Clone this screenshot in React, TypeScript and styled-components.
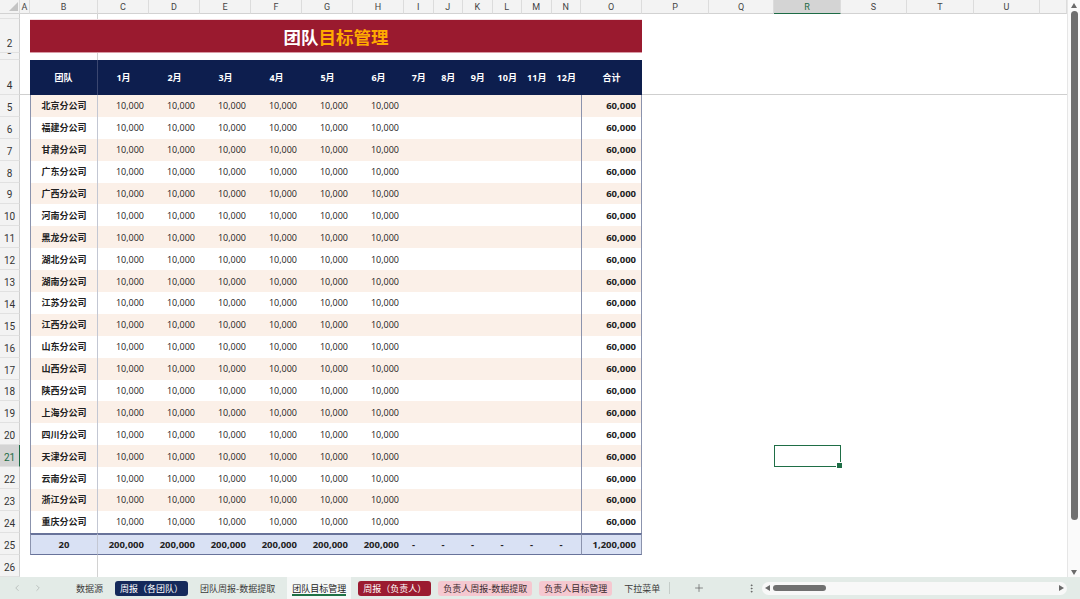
import React from "react";
import styled, { createGlobalStyle, css } from "styled-components";
import { ChevronLeft, ChevronRight, Plus, EllipsisVertical } from "lucide-react";

const COLS =
  "20px 10px 68px repeat(6, 51px) repeat(6, 29.5px) 61px 67px 65px 67px 66px 67px 66px 27px";
const LETTERS = ["A", "B", "C", "D", "E", "F", "G", "H", "I", "J", "K", "L", "M", "N", "O", "P", "Q", "R", "S", "T", "U", ""];
const MONTHS = ["1月", "2月", "3月", "4月", "5月", "6月", "7月", "8月", "9月", "10月", "11月", "12月"];
const BRANCHES = [
  "北京分公司", "福建分公司", "甘肃分公司", "广东分公司", "广西分公司",
  "河南分公司", "黑龙分公司", "湖北分公司", "湖南分公司", "江苏分公司",
  "江西分公司", "山东分公司", "山西分公司", "陕西分公司", "上海分公司",
  "四川分公司", "天津分公司", "云南分公司", "浙江分公司", "重庆分公司",
];
const ROW_H = 21.9;
const SELECTED_ROW = 21;

type Tone = "peach" | "plain" | "total";
type TabKind = "plain" | "navy" | "active" | "crimson" | "pink";

const TABS: { label: string; kind: TabKind }[] = [
  { label: "数据源", kind: "plain" },
  { label: "周报（各团队）", kind: "navy" },
  { label: "团队周报-数据提取", kind: "plain" },
  { label: "团队目标管理", kind: "active" },
  { label: "周报（负责人）", kind: "crimson" },
  { label: "负责人周报-数据提取", kind: "pink" },
  { label: "负责人目标管理", kind: "pink" },
  { label: "下拉菜单", kind: "plain" },
];

const TONE_BG: Record<Tone, string> = {
  peach: "#fbf0e8",
  plain: "#ffffff",
  total: "#d9e1f4",
};

const GlobalStyle = createGlobalStyle`
  * { box-sizing: border-box; }
  body {
    margin: 0;
    background: #fff;
    font-family: "Open Sans", "Noto Sans CJK SC", sans-serif;
  }
`;

const Window = styled.div`
  width: 1080px;
  height: 599px;
  display: flex;
  flex-direction: column;
  overflow: hidden;
  background: #fff;
`;

const Main = styled.div`
  display: flex;
  height: 577px;
`;

const Sheet = styled.div`
  width: 1067px;
  display: flex;
  flex-direction: column;
  overflow: hidden;
`;

const GridRow = styled.div<{ $h: number }>`
  display: grid;
  grid-template-columns: ${COLS};
  height: ${(p) => p.$h}px;
  flex-shrink: 0;
`;

const ColHead = styled.div<{ $active?: boolean }>`
  display: flex;
  align-items: center;
  justify-content: center;
  font: 9px Roboto, sans-serif;
  color: ${(p) => (p.$active ? "#1d6b45" : "#444")};
  background: ${(p) => (p.$active ? "#d4d4d4" : "#f3f3f3")};
  border-right: 1px solid #dcdcdc;
  border-bottom: 1px solid ${(p) => (p.$active ? "#1d6b45" : "#d2d2d2")};
`;

const Corner = styled(ColHead)`
  align-items: flex-end;
  justify-content: flex-end;
  padding: 0 1px 2px 0;
`;

const RowNum = styled.div<{ $active?: boolean }>`
  display: flex;
  align-items: flex-end;
  justify-content: center;
  overflow: hidden;
  padding-bottom: 2px;
  font: 10px Roboto, sans-serif;
  line-height: 12px;
  color: ${(p) => (p.$active ? "#1d6b45" : "#333")};
  background: ${(p) => (p.$active ? "#d4d4d4" : "#f3f3f3")};
  border-right: 1px solid ${(p) => (p.$active ? "#1d6b45" : "#cfcfcf")};
  border-bottom: 1px solid #e1e1e1;
`;

const Blank = styled.div<{ $frozenRight?: boolean; $frozenBottom?: boolean }>`
  border-right: ${(p) => (p.$frozenRight ? "1px solid #d2d2d2" : "none")};
  border-bottom: ${(p) => (p.$frozenBottom ? "1px solid #cfcfcf" : "none")};
`;

const Filler = styled(Blank)`
  grid-column: 17 / -1;
`;

const Title = styled.div`
  grid-column: 3 / 17;
  display: flex;
  align-items: center;
  justify-content: center;
  background: #9a1a2f;
  border-top: 1px solid #f3dde1;
  border-bottom: 1px solid #d99aa5;
  font-family: "Noto Sans CJK SC", sans-serif;
  font-size: 17.5px;
  font-weight: 700;
  color: #fff;
  span {
    color: #ffab00;
  }
`;

const HeadCell = styled.div<{ $divider?: boolean }>`
  display: flex;
  align-items: center;
  justify-content: center;
  background: #0d1e4e;
  color: #fff;
  font-size: 9px;
  font-weight: 700;
  white-space: nowrap;
  border-right: ${(p) => (p.$divider ? "1px solid #3b4770" : "none")};
`;

const toneBorders = css<{ $tone: Tone }>`
  ${(p) =>
    p.$tone === "total" &&
    css`
      border-top: 2px solid #68739a;
      border-bottom: 1px solid #68739a;
    `}
`;

const NameCell = styled.div<{ $tone: Tone }>`
  display: flex;
  align-items: center;
  justify-content: center;
  background: ${(p) => TONE_BG[p.$tone]};
  border-left: 1px solid #8b93ad;
  border-right: 1px solid #c3c7d3;
  font-size: ${(p) => (p.$tone === "total" ? "9.5px" : "9px")};
  font-weight: 700;
  color: #222;
  ${toneBorders}
`;

const NumCell = styled.div<{ $tone: Tone; $dash?: boolean }>`
  display: flex;
  align-items: center;
  justify-content: ${(p) => (p.$dash ? "flex-start" : "flex-end")};
  padding: ${(p) => (p.$dash ? "0 0 0 8px" : "0 5px 0 0")};
  background: ${(p) => TONE_BG[p.$tone]};
  font-size: ${(p) => (p.$tone === "total" ? "9.5px" : "9px")};
  font-weight: ${(p) => (p.$tone === "total" ? 700 : 400)};
  color: #222;
  white-space: nowrap;
  ${toneBorders}
`;

const SumCell = styled.div<{ $tone: Tone }>`
  display: flex;
  align-items: center;
  justify-content: flex-end;
  padding-right: 5px;
  background: ${(p) => TONE_BG[p.$tone]};
  border-left: 1px solid #8b93ad;
  border-right: 1px solid #8b93ad;
  font-size: 9.5px;
  font-weight: 700;
  color: #222;
  white-space: nowrap;
  ${toneBorders}
`;

const Selected = styled.div`
  grid-column: 19;
  position: relative;
  border: 1.5px solid #1f6e46;
  &::after {
    content: "";
    position: absolute;
    right: -3px;
    bottom: -3px;
    width: 5px;
    height: 5px;
    background: #1f6e46;
    border: 1px solid #fff;
  }
`;

const VScroll = styled.div`
  width: 13px;
  display: flex;
  flex-direction: column;
  align-items: center;
  padding: 3px 0 2px;
  background: #fafafa;
  border-left: 1px solid #e6e6e6;
`;

const VThumb = styled.div`
  width: 7px;
  height: 509px;
  margin-top: 3px;
  border-radius: 4px;
  background: #707070;
`;

const DownArrow = styled.svg`
  margin-top: auto;
`;

const TabBar = styled.div`
  height: 22px;
  display: flex;
  align-items: center;
  background: #e3ebe7;
  font-family: "Noto Sans CJK SC", sans-serif;
  font-size: 9px;
`;

const Nav = styled.div`
  width: 71px;
  display: flex;
  gap: 11px;
  padding-left: 12px;
  color: #a3a9a6;
`;

const TabList = styled.div`
  display: flex;
  align-items: center;
  gap: 7px;
  height: 100%;
`;

const TAB_STYLES: Record<TabKind, ReturnType<typeof css>> = {
  plain: css`
    color: #3a3a3a;
  `,
  navy: css`
    color: #fff;
    background: #14295a;
  `,
  crimson: css`
    color: #fff;
    background: #9b1b30;
  `,
  pink: css`
    color: #3a2a2d;
    background: #f5c8d0;
  `,
  active: css`
    align-self: stretch;
    height: auto;
    color: #222;
    background-color: #f6f8f7;
    background-image: linear-gradient(#1e7145, #1e7145);
    background-repeat: no-repeat;
    background-size: calc(100% - 10px) 2px;
    background-position: 5px calc(100% - 3px);
    border-radius: 0;
  `,
};

const Tab = styled.div<{ $kind: TabKind }>`
  height: 15px;
  padding: 0 5px;
  display: flex;
  align-items: center;
  white-space: nowrap;
  border-radius: 3px;
  ${(p) => TAB_STYLES[p.$kind]}
`;

const Sep = styled.div`
  width: 1px;
  height: 12px;
  margin-left: 4px;
  background: #c5cdc9;
`;

const IconBtn = styled.div<{ $ml: number }>`
  display: flex;
  align-items: center;
  justify-content: center;
  width: 14px;
  margin-left: ${(p) => p.$ml}px;
  color: #555;
`;

const HScroll = styled.div`
  flex: 1;
  height: 13px;
  margin: 0 13px 0 4px;
  display: flex;
  align-items: center;
  padding: 0 3px;
  border-radius: 7px;
  background: #f8f8f8;
`;

const HThumb = styled.div`
  width: 53px;
  height: 6px;
  margin-left: 3px;
  border-radius: 3px;
  background: #707070;
`;

const RightArrow = styled.svg`
  margin-left: auto;
`;

const Tri = ({ dir }: { dir: "up" | "down" | "left" | "right" }) => {
  const pts = {
    up: "0,5 3,0 6,5",
    down: "0,0 6,0 3,5",
    left: "5,0 5,6 0,3",
    right: "0,0 5,3 0,6",
  }[dir];
  const vertical = dir === "up" || dir === "down";
  const w = vertical ? 6 : 5;
  const h = vertical ? 5 : 6;
  const Comp = dir === "down" ? DownArrow : dir === "right" ? RightArrow : "svg";
  return (
    <Comp width={w} height={h} viewBox={`0 0 ${w} ${h}`}>
      <polygon points={pts} fill="#6a6a6a" />
    </Comp>
  );
};

const num = (n: number) => n.toLocaleString("en-US");

const EmptyRow = ({ n, h }: { n: number; h: number }) => (
  <GridRow $h={h}>
    <RowNum>{n}</RowNum>
    <Blank />
    <Blank $frozenRight />
  </GridRow>
);

export default function App() {
  return (
    <Window>
      <GlobalStyle />
      <Main>
        <Sheet>
          <GridRow $h={14}>
            <Corner>
              <svg width="9" height="9" viewBox="0 0 9 9">
                <polygon points="9,0 9,9 0,9" fill="#c4c4c4" />
              </svg>
            </Corner>
            {LETTERS.map((l, i) => (
              <ColHead key={i} $active={l === "R"}>
                {l}
              </ColHead>
            ))}
          </GridRow>

          <EmptyRow n={1} h={5} />
          <GridRow $h={34}>
            <RowNum>2</RowNum>
            <Blank />
            <Title>
              团队<span>目标管理</span>
            </Title>
          </GridRow>
          <EmptyRow n={3} h={7} />

          <GridRow $h={35}>
            <RowNum>4</RowNum>
            <Blank $frozenBottom />
            <HeadCell $divider>团队</HeadCell>
            {MONTHS.map((m) => (
              <HeadCell key={m}>{m}</HeadCell>
            ))}
            <HeadCell>合计</HeadCell>
            <Filler $frozenBottom />
          </GridRow>

          {BRANCHES.map((name, i) => {
            const rowNo = i + 5;
            const tone: Tone = i % 2 === 0 ? "peach" : "plain";
            return (
              <GridRow key={name} $h={ROW_H}>
                <RowNum $active={rowNo === SELECTED_ROW}>{rowNo}</RowNum>
                <Blank />
                <NameCell $tone={tone}>{name}</NameCell>
                {MONTHS.map((m, j) => (
                  <NumCell key={m} $tone={tone}>
                    {j < 6 ? num(10000) : ""}
                  </NumCell>
                ))}
                <SumCell $tone={tone}>{num(60000)}</SumCell>
                {rowNo === SELECTED_ROW && <Selected />}
              </GridRow>
            );
          })}

          <GridRow $h={ROW_H}>
            <RowNum>25</RowNum>
            <Blank />
            <NameCell $tone="total">{BRANCHES.length}</NameCell>
            {MONTHS.map((m, j) => (
              <NumCell key={m} $tone="total" $dash={j >= 6}>
                {j < 6 ? num(200000) : "-"}
              </NumCell>
            ))}
            <SumCell $tone="total">{num(1200000)}</SumCell>
          </GridRow>

          <EmptyRow n={26} h={ROW_H} />
        </Sheet>

        <VScroll>
          <Tri dir="up" />
          <VThumb />
          <Tri dir="down" />
        </VScroll>
      </Main>

      <TabBar>
        <Nav>
          <ChevronLeft size={10} strokeWidth={1.5} />
          <ChevronRight size={10} strokeWidth={1.5} />
        </Nav>
        <TabList>
          {TABS.map((t) => (
            <Tab key={t.label} $kind={t.kind}>
              {t.label}
            </Tab>
          ))}
        </TabList>
        <Sep />
        <IconBtn $ml={22}>
          <Plus size={12} strokeWidth={1.3} />
        </IconBtn>
        <IconBtn $ml={38}>
          <EllipsisVertical size={11} strokeWidth={1.6} />
        </IconBtn>
        <HScroll>
          <Tri dir="left" />
          <HThumb />
          <Tri dir="right" />
        </HScroll>
      </TabBar>
    </Window>
  );
}
